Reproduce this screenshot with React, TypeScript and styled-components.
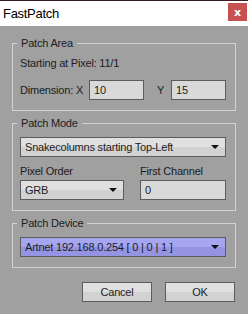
import React from 'react';
import styled, { createGlobalStyle } from 'styled-components';

const GlobalStyle = createGlobalStyle`
  html, body { margin: 0; padding: 0; background: #a0a0a0; }
  body {
    font-family: "Liberation Sans", Arial, sans-serif;
    font-size: 11px;
    letter-spacing: -0.2px;
    color: #1c1c24;
    white-space: nowrap;
  }
`;

const Window = styled.div`
  width: 248px;
  height: 314px;
  background: #a0a0a0;
  border-top: 1px solid #3a1c1c;
  box-sizing: border-box;
  display: flex;
  flex-direction: column;
`;

const TitleBar = styled.div`
  height: 25px;
  background: #fff;
  display: flex;
  align-items: flex-start;
  justify-content: space-between;
`;

const Title = styled.div`
  font-size: 13px;
  line-height: 14px;
  letter-spacing: -0.3px;
  padding: 6px 0 0 3px;
  color: #000;
`;

const CloseButton = styled.div`
  width: 19px;
  height: 18px;
  margin-top: 2px;
  margin-right: 1px;
  background: #c75050;
  color: #fff;
  font: bold 11px "DejaVu Sans", sans-serif;
  display: flex;
  align-items: center;
  justify-content: center;
`;

const Body = styled.div`
  padding: 10px 12px 0 12px;
  display: flex;
  flex-direction: column;
`;

const Group = styled.fieldset<{ $gap?: number }>`
  margin: ${p => p.$gap ?? 0}px 0 0 0;
  padding: 0 9px 10px 7px;
  border: 1px solid #d2d2d2;
  min-width: 0;
`;

const Legend = styled.legend`
  margin-left: -3px;
  padding: 0 4px;
  line-height: 14px;
`;

const Text = styled.div<{ $top?: number }>`
  line-height: 14px;
  margin-top: ${p => p.$top ?? 0}px;
`;

const Row = styled.div<{ $top?: number }>`
  display: flex;
  align-items: center;
  margin-top: ${p => p.$top ?? 0}px;
`;

const Input = styled.div<{ $width?: number }>`
  box-sizing: border-box;
  height: 20px;
  ${p => (p.$width ? `width: ${p.$width}px;` : 'flex: 1;')}
  background: #d9d9d9;
  border: 1px solid #5c5c5c;
  padding: 0 4px;
  line-height: 18px;
`;

const AxisLabel = styled.span<{ $width: number; $pad?: number }>`
  box-sizing: border-box;
  width: ${p => p.$width}px;
  padding-left: ${p => p.$pad ?? 0}px;
  flex: none;
`;

const Select = styled.div<{ $accent?: boolean; $top?: number }>`
  box-sizing: border-box;
  height: 20px;
  margin-top: ${p => p.$top ?? 0}px;
  border: 1px solid #5c5c5c;
  padding: 0 0 0 4px;
  display: flex;
  align-items: center;
  justify-content: space-between;
  background: ${p =>
    p.$accent
      ? 'linear-gradient(#a5a5f0 0%, #a5a5f0 50%, #9494e3 50%, #9494e3 100%)'
      : 'linear-gradient(#e0e0e0 0%, #e0e0e0 50%, #d2d2d2 50%, #d2d2d2 100%)'};
`;

const Arrow = styled.span`
  width: 0;
  height: 0;
  border-left: 4px solid transparent;
  border-right: 4px solid transparent;
  border-top: 4px solid #111;
  margin-right: 6px;
`;

const Columns = styled.div`
  display: grid;
  grid-template-columns: 104px 1fr;
  column-gap: 16px;
  margin-top: 7px;
`;

const Field = styled.div`
  display: flex;
  flex-direction: column;
  gap: 2px;
`;

const Buttons = styled.div`
  display: flex;
  justify-content: flex-end;
  gap: 13px;
  margin-top: 14px;
  padding-right: 1px;
`;

const Button = styled.div`
  box-sizing: border-box;
  width: 70px;
  height: 20px;
  border: 1px solid #5c5c5c;
  background: linear-gradient(#e0e0e0 0%, #e0e0e0 50%, #d2d2d2 50%, #d2d2d2 100%);
  text-align: center;
  line-height: 18px;
`;

const Dropdown = ({ value, accent, top }: { value: string; accent?: boolean; top?: number }) => (
  <Select $accent={accent} $top={top}>
    <span>{value}</span>
    <Arrow />
  </Select>
);

function App() {
  return (
    <Window>
      <GlobalStyle />
      <TitleBar>
        <Title>FastPatch</Title>
        <CloseButton>x</CloseButton>
      </TitleBar>
      <Body>
        <Group>
          <Legend>Patch Area</Legend>
          <Text $top={6}>Starting at Pixel: 11/1</Text>
          <Row $top={10}>
            <AxisLabel $width={69}>Dimension: X</AxisLabel>
            <Input $width={55}>10</Input>
            <AxisLabel $width={27} $pad={13}>Y</AxisLabel>
            <Input>15</Input>
          </Row>
        </Group>
        <Group $gap={5}>
          <Legend>Patch Mode</Legend>
          <Dropdown value="Snakecolumns starting Top-Left" top={7} />
          <Columns>
            <Field>
              <Text>Pixel Order</Text>
              <Dropdown value="GRB" />
            </Field>
            <Field>
              <Text>First Channel</Text>
              <Input>0</Input>
            </Field>
          </Columns>
        </Group>
        <Group $gap={5}>
          <Legend>Patch Device</Legend>
          <Dropdown value="Artnet 192.168.0.254 [ 0 | 0 | 1 ]" accent top={7} />
        </Group>
        <Buttons>
          <Button>Cancel</Button>
          <Button>OK</Button>
        </Buttons>
      </Body>
    </Window>
  );
}

export default App;
